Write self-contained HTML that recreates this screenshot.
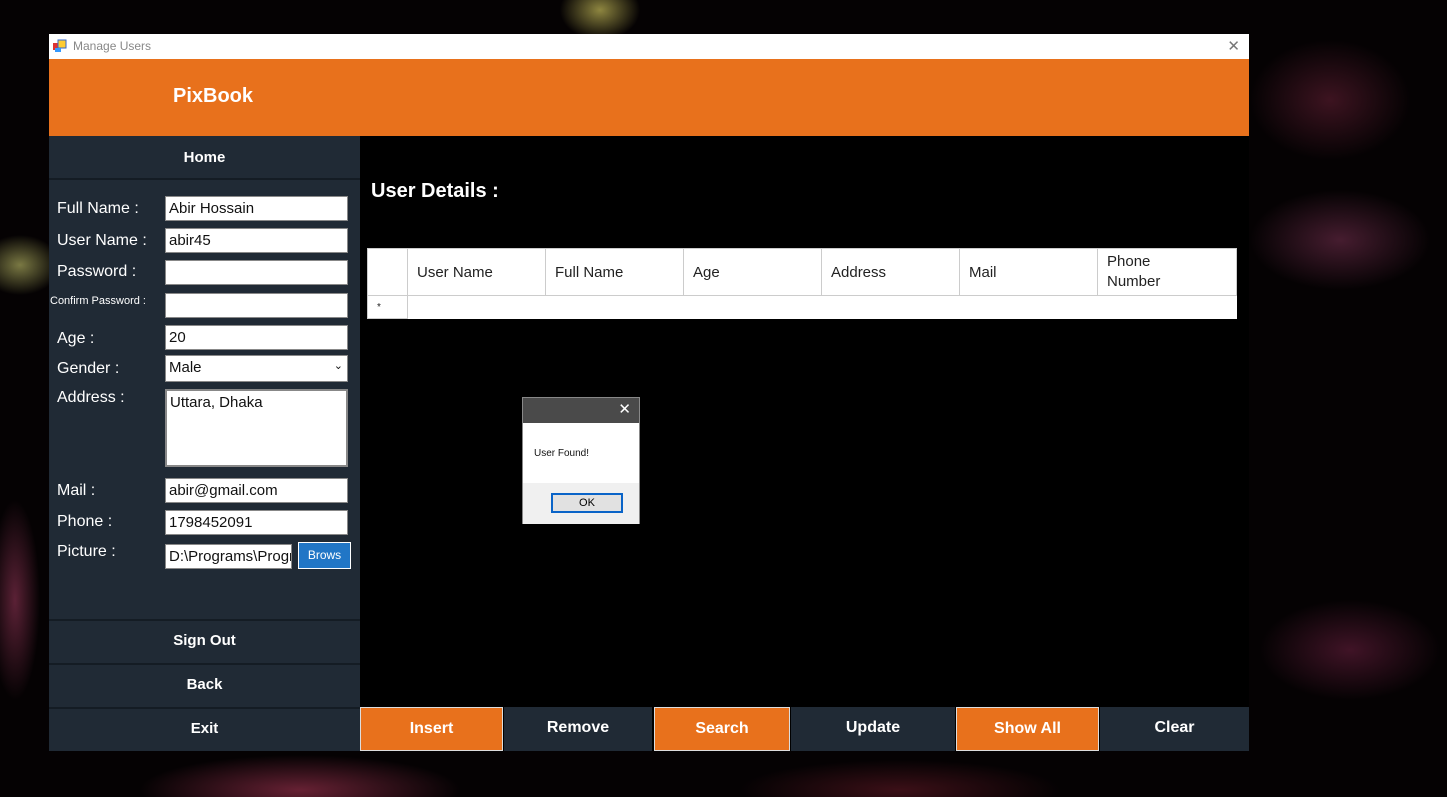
<!DOCTYPE html>
<html><head><style>
*{margin:0;padding:0;box-sizing:border-box}
body{width:1447px;height:797px;overflow:hidden;position:relative;font-family:"Century Gothic","Liberation Sans",sans-serif;
background:#050203;
background-image:
radial-gradient(ellipse 40px 30px at 600px 10px,rgba(200,190,90,.7),transparent),
radial-gradient(ellipse 40px 30px at 20px 265px,rgba(200,200,110,.6),transparent),
radial-gradient(ellipse 80px 60px at 1330px 100px,rgba(190,60,100,.3),transparent),
radial-gradient(ellipse 90px 50px at 1340px 240px,rgba(220,90,150,.3),transparent),
radial-gradient(ellipse 90px 50px at 1350px 650px,rgba(200,60,120,.3),transparent),
radial-gradient(ellipse 160px 35px at 300px 790px,rgba(220,70,110,.45),transparent),
radial-gradient(ellipse 160px 30px at 900px 790px,rgba(160,40,60,.35),transparent),
radial-gradient(ellipse 25px 100px at 15px 600px,rgba(220,80,130,.4),transparent);}
.win{position:absolute;left:49px;top:34px;width:1200px;height:717px;background:#000}
.tb{position:absolute;left:0;top:0;width:1200px;height:25px;background:#fff;font-size:12px;color:#888;font-family:"Liberation Sans",sans-serif}
.hdr{position:absolute;left:0;top:25px;width:1200px;height:77px;background:#e8711c}
.hdr span{position:absolute;left:124px;top:26px;color:#fff;font-weight:bold;font-size:20px}
.lp{position:absolute;left:0;top:102px;width:311px;height:615px;background:#202a35}
.nb{position:absolute;left:0;width:311px;height:44px;background:#202a35;border-top:2px solid #141c24;color:#fff;font-weight:bold;font-size:15px;text-align:center;line-height:40px}
.lb{position:absolute;left:8px;color:#fff;font-size:16px}
.in{position:absolute;left:116px;width:183px;height:25px;background:#fff;border:1px solid #888;font-size:15px;color:#111;padding:3px 3px;white-space:nowrap;overflow:hidden}
.bb{position:absolute;top:673px;height:44px;color:#fff;font-weight:bold;font-size:16px;text-align:center;line-height:42px}
.o{background:#e8711c;border:1px solid #ddd}.d{background:#202a35}
table{position:absolute;left:318px;top:214px;width:869px;border-collapse:collapse;background:#fff;font-size:15px;color:#222;table-layout:fixed}
td{border:1px solid #ccc;padding-left:9px}
</style></head><body>
<div class="win">
<div class="tb"><svg style="position:absolute;left:4px;top:5px" width="14" height="14"><rect x="0" y="4" width="7" height="7" fill="#d33"/><rect x="5" y="1" width="8" height="8" fill="#fc3" stroke="#36c"/><rect x="2" y="9" width="6" height="4" fill="#39f"/></svg><span style="position:absolute;left:24px;top:5px">Manage Users</span><span style="position:absolute;right:9px;top:3px;font-size:15px;color:#777">✕</span></div>
<div class="hdr"><span>PixBook</span></div>
<div class="lp">
<div class="nb" style="top:0;border-top:none;border-bottom:2px solid #141c24;line-height:44px">Home</div>
<div class="lb" style="top:64px">Full Name :</div><div class="in" style="top:60px">Abir Hossain</div>
<div class="lb" style="top:96px">User Name :</div><div class="in" style="top:92px">abir45</div>
<div class="lb" style="top:127px">Password :</div><div class="in" style="top:124px"></div>
<div class="lb" style="top:159px;left:1px;font-size:11px">Confirm Password :</div><div class="in" style="top:157px"></div>
<div class="lb" style="top:194px">Age :</div><div class="in" style="top:189px">20</div>
<div class="lb" style="top:224px">Gender :</div><div class="in" style="top:219px;height:27px">Male<span style="position:absolute;right:4px;top:3px;font-size:11px">⌄</span></div>
<div class="lb" style="top:253px">Address :</div><div class="in" style="top:253px;height:78px;border:2px solid #888">Uttara, Dhaka</div>
<div class="lb" style="top:346px">Mail :</div><div class="in" style="top:342px">abir@gmail.com</div>
<div class="lb" style="top:377px">Phone :</div><div class="in" style="top:374px">1798452091</div>
<div class="lb" style="top:407px">Picture :</div><div class="in" style="top:408px;width:127px">D:\Programs\Programs</div>
<div style="position:absolute;left:249px;top:406px;width:53px;height:27px;background:#2176c6;border:1px solid #fff;color:#fff;font-size:12px;text-align:center;line-height:25px">Brows</div>
<div class="nb" style="top:483px">Sign Out</div>
<div class="nb" style="top:527px">Back</div>
<div class="nb" style="top:571px">Exit</div>
</div>
<div style="position:absolute;left:322px;top:146px;color:#fff;font-weight:bold;font-size:20px">User Details :</div>
<table><colgroup><col style="width:40px"><col style="width:138px"><col style="width:138px"><col style="width:138px"><col style="width:138px"><col style="width:138px"><col style="width:139px"></colgroup>
<tr style="height:47px"><td></td><td>User Name</td><td>Full Name</td><td>Age</td><td>Address</td><td>Mail</td><td style="line-height:20px">Phone<br>Number</td></tr>
<tr style="height:23px"><td style="font-size:10px">*</td><td colspan="6" style="border:none"></td></tr></table>
<div class="bb o" style="left:311px;width:143px">Insert</div>
<div class="bb d" style="left:455px;width:148px">Remove</div>
<div class="bb o" style="left:605px;width:136px">Search</div>
<div class="bb d" style="left:742px;width:164px">Update</div>
<div class="bb o" style="left:907px;width:143px">Show All</div>
<div class="bb d" style="left:1051px;width:149px">Clear</div>
<div style="position:absolute;left:473px;top:363px;width:118px;height:127px;background:#fff;border:1px solid #888;font-family:'Liberation Sans',sans-serif">
<div style="height:25px;background:#4a4a4a;color:#fff;text-align:right;padding-right:8px;font-size:15px;line-height:24px">✕</div>
<div style="position:absolute;left:11px;top:50px;font-size:10px;color:#111">User Found!</div>
<div style="position:absolute;left:0;top:85px;width:116px;height:41px;background:#f0f0f0"></div>
<div style="position:absolute;left:28px;top:95px;width:72px;height:20px;background:#e1e1e1;border:2px solid #0a64c8;font-size:11px;text-align:center;line-height:16px">OK</div>
</div>
</div>
</body></html>
